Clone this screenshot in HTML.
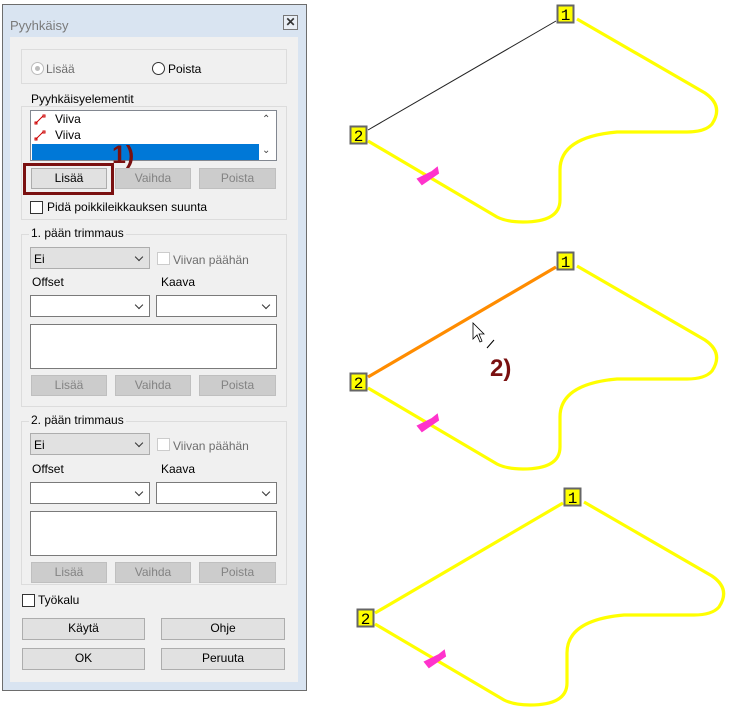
<!DOCTYPE html>
<html><head><meta charset="utf-8"><style>
*{margin:0;padding:0;box-sizing:border-box}
body{width:737px;height:708px;background:#fff;position:relative;overflow:hidden;font-family:"Liberation Sans",sans-serif;font-size:12px;color:#000}
.a{position:absolute}
.grp{position:absolute;border:1px solid #dcdcdc}
.gt{position:absolute;background:#f0f0f0;padding:0 2px;font-size:12px;line-height:13px}
.btn{position:absolute;border:1px solid #adadad;background:#e1e1e1;text-align:center;line-height:19px;font-size:12px}
.dis{background:#ccc;border-color:#bfbfbf;color:#838383}
.cb{position:absolute;width:13px;height:13px;border:1px solid #333;background:#fff}
.cmb{position:absolute;border:1px solid #7a7a7a;background:#fff;height:22px}
.cmb::after{content:"";position:absolute;right:7px;top:6px;width:5px;height:5px;border-right:1px solid #333;border-bottom:1px solid #333;transform:rotate(45deg)}
.ta{position:absolute;border:1px solid #7a7a7a;background:#fff}
.lbl{position:absolute;line-height:14px}
</style></head><body>
<div class="a" style="left:2px;top:4px;width:305px;height:687px;border:1px solid #6d6d6d;background:#d9e4f1"></div>
<div class="lbl" style="left:10px;top:19px;color:#7a7a7a;font-size:13px">Pyyhkäisy</div>
<div class="a" style="left:283px;top:15px;width:15px;height:15px;border:1px solid #777;background:#e9eef5;font-size:12px;line-height:12px;text-align:center;font-weight:bold;color:#333">✕</div>
<div class="a" style="left:10px;top:37px;width:288px;height:645px;background:#f0f0f0"></div>

<div class="grp" style="left:21px;top:49px;width:266px;height:35px"></div>
<div class="a" style="left:31px;top:62px;width:13px;height:13px;border-radius:50%;border:1px solid #bcbcbc;background:#fff"><div class="a" style="left:3px;top:3px;width:5px;height:5px;border-radius:50%;background:#bcbcbc"></div></div>
<div class="lbl" style="left:46px;top:62px;color:#6d6d6d">Lisää</div>
<div class="a" style="left:152px;top:62px;width:13px;height:13px;border-radius:50%;border:1px solid #333;background:#fff"></div>
<div class="lbl" style="left:168px;top:62px">Poista</div>

<div class="grp" style="left:21px;top:106px;width:266px;height:114px"></div>
<div class="gt" style="left:29px;top:93px">Pyyhkäisyelementit</div>
<div class="a" style="left:30px;top:110px;width:247px;height:51px;border:1px solid #828790;background:#fff"></div>
<svg class="a" style="left:34px;top:113px" width="12" height="36"><g stroke="#c00" fill="none"><path d="M2 10 L9 3"/><rect x="1" y="9" width="2" height="2"/><rect x="9" y="2" width="2" height="2"/><path d="M2 26 L9 19"/><rect x="1" y="25" width="2" height="2"/><rect x="9" y="18" width="2" height="2"/></g></svg>
<div class="lbl" style="left:55px;top:112px">Viiva</div>
<div class="lbl" style="left:55px;top:128px">Viiva</div>
<div class="a" style="left:32px;top:144px;width:227px;height:16px;background:#0078d7"></div>
<div class="lbl" style="left:262px;top:113px;font-size:10px;color:#444">⌃</div>
<div class="lbl" style="left:262px;top:144px;font-size:10px;color:#444">⌄</div>
<div class="a" style="left:23px;top:163px;width:91px;height:32px;border:3px solid #7a1010"></div>
<div class="btn" style="left:31px;top:168px;width:76px;height:21px">Lisää</div>
<div class="btn dis" style="left:115px;top:168px;width:76px;height:21px">Vaihda</div>
<div class="btn dis" style="left:199px;top:168px;width:77px;height:21px">Poista</div>
<div class="a" style="left:112px;top:141px;font-size:25px;font-weight:bold;color:#7a1010;line-height:28px">1)</div>
<div class="cb" style="left:30px;top:201px"></div>
<div class="lbl" style="left:47px;top:200px">Pidä poikkileikkauksen suunta</div>

<div class="grp" style="left:21px;top:234px;width:266px;height:173px"></div>
<div class="gt" style="left:29px;top:227px">1. pään trimmaus</div>
<div class="cmb" style="left:30px;top:247px;width:120px;background:#e1e1e1;border-color:#adadad"></div>
<div class="lbl" style="left:34px;top:252px">Ei</div>
<div class="cb" style="left:157px;top:252px;border-color:#ccc"></div>
<div class="lbl" style="left:173px;top:253px;color:#6d6d6d">Viivan päähän</div>
<div class="lbl" style="left:32px;top:275px">Offset</div>
<div class="lbl" style="left:161px;top:275px">Kaava</div>
<div class="cmb" style="left:30px;top:295px;width:120px"></div>
<div class="cmb" style="left:156px;top:295px;width:121px"></div>
<div class="ta" style="left:30px;top:324px;width:247px;height:45px"></div>
<div class="btn dis" style="left:31px;top:375px;width:76px;height:21px">Lisää</div>
<div class="btn dis" style="left:115px;top:375px;width:76px;height:21px">Vaihda</div>
<div class="btn dis" style="left:199px;top:375px;width:77px;height:21px">Poista</div>

<div class="grp" style="left:21px;top:421px;width:266px;height:164px"></div>
<div class="gt" style="left:29px;top:414px">2. pään trimmaus</div>
<div class="cmb" style="left:30px;top:433px;width:120px;background:#e1e1e1;border-color:#adadad"></div>
<div class="lbl" style="left:34px;top:438px">Ei</div>
<div class="cb" style="left:157px;top:438px;border-color:#ccc"></div>
<div class="lbl" style="left:173px;top:439px;color:#6d6d6d">Viivan päähän</div>
<div class="lbl" style="left:32px;top:462px">Offset</div>
<div class="lbl" style="left:161px;top:462px">Kaava</div>
<div class="cmb" style="left:30px;top:482px;width:120px"></div>
<div class="cmb" style="left:156px;top:482px;width:121px"></div>
<div class="ta" style="left:30px;top:511px;width:247px;height:45px"></div>
<div class="btn dis" style="left:31px;top:562px;width:76px;height:21px">Lisää</div>
<div class="btn dis" style="left:115px;top:562px;width:76px;height:21px">Vaihda</div>
<div class="btn dis" style="left:199px;top:562px;width:77px;height:21px">Poista</div>

<div class="cb" style="left:22px;top:594px"></div>
<div class="lbl" style="left:38px;top:593px">Työkalu</div>
<div class="btn" style="left:22px;top:618px;width:123px;height:22px">Käytä</div>
<div class="btn" style="left:161px;top:618px;width:124px;height:22px">Ohje</div>
<div class="btn" style="left:22px;top:648px;width:123px;height:22px">OK</div>
<div class="btn" style="left:161px;top:648px;width:124px;height:22px">Peruuta</div>

<svg class="a" style="left:0;top:0" width="737" height="708">
<defs>
<g id="sh">
<path d="M577 19 L705 93 Q724 106 712 124 Q705 132 687 132 L617 132 Q560 137 560 170 L560 200 Q560 222 523 222 Q507 222 497 217 L368 141" fill="none" stroke="#ffff00" stroke-width="3.2"/>
<path d="M418 179 L432 172 L437 168 L438 173 L422 184 Z" fill="#ff33cc" stroke="#ff33cc" stroke-width="2"/>
</g>
<g id="lb1"><rect x="557.5" y="5.5" width="16" height="17" fill="#ffff00" stroke="#666" stroke-width="2"/><text x="565.5" y="20" font-family="Liberation Mono" font-size="16" text-anchor="middle">1</text></g>
<g id="lb2"><rect x="350.5" y="126.5" width="16" height="17" fill="#ffff00" stroke="#666" stroke-width="2"/><text x="358.5" y="141" font-family="Liberation Mono" font-size="16" text-anchor="middle">2</text></g>
</defs>
<use href="#sh"/>
<line x1="556" y1="21" x2="368" y2="130" stroke="#222" stroke-width="1"/>
<use href="#lb1"/><use href="#lb2"/>
<g transform="translate(0,247)">
<use href="#sh"/>
<line x1="556" y1="20" x2="368" y2="130" stroke="#ff8c00" stroke-width="3.2"/>
<use href="#lb1"/><use href="#lb2"/>
</g>
<g transform="translate(7,483)">
<use href="#sh"/>
<line x1="556" y1="20" x2="368" y2="130" stroke="#ffff00" stroke-width="3.2"/>
<use href="#lb1"/><use href="#lb2"/>
</g>
<path d="M473 323 L473 339 L477 335 L480 342 L482 341 L479 334 L484 334 Z" fill="#fff" stroke="#000" stroke-width="0.8"/>
<line x1="487" y1="348" x2="494" y2="340" stroke="#000" stroke-width="1"/>
<text x="490" y="376" font-family="Liberation Sans" font-size="24" font-weight="bold" fill="#7a1010">2)</text>
</svg>
</body></html>
